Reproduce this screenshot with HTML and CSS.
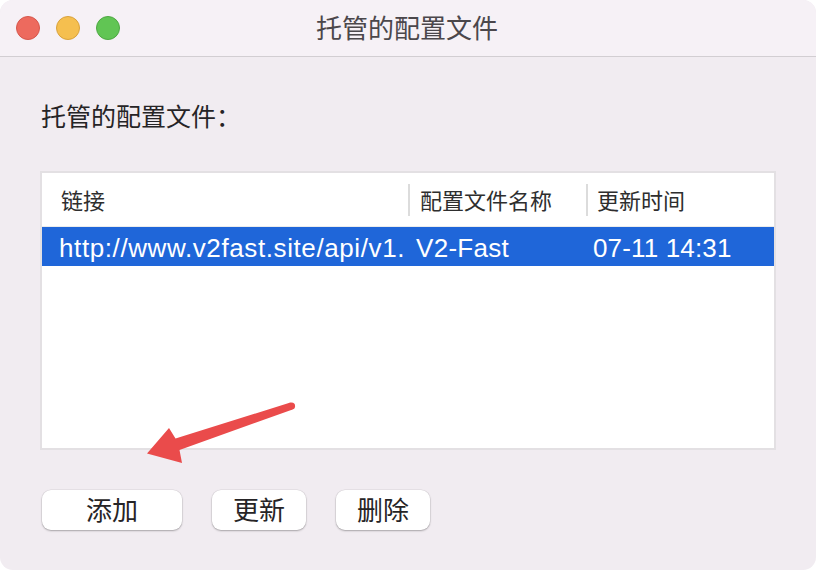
FILE: index.html
```html
<!DOCTYPE html>
<html lang="zh-CN">
<head>
<meta charset="utf-8">
<link rel="stylesheet" href="styles.css">
</head>
<body>
<div class="window">
  <div class="titlebar">
    <div class="lights">
      <span class="light red"></span>
      <span class="light yellow"></span>
      <span class="light green"></span>
    </div>
    <div class="title">托管的配置文件</div>
  </div>
  <div class="content">
    <div class="label">托管的配置文件：</div>
    <div class="table">
      <div class="thead">
        <div class="th c1">链接</div>
        <div class="th c2">配置文件名称</div>
        <div class="th c3">更新时间</div>
      </div>
      <div class="row selected">
        <div class="td c1">http://www.v2fast.site/api/v1.</div>
        <div class="td c2">V2-Fast</div>
        <div class="td c3">07-11 14:31</div>
      </div>
    </div>
    <div class="buttons">
      <button class="btn wide">添加</button>
      <button class="btn">更新</button>
      <button class="btn">删除</button>
    </div>
  </div>
  <svg class="arrow" width="816" height="570" viewBox="0 0 816 570">
    <circle cx="291.5" cy="406" r="3.6" fill="#ea4b4b"/>
    <polygon fill="#ea4b4b" points="290.4,402.6 175.5,438.5 169,428 147,453.5 182,463 179.5,450 292.6,409.4"/>
  </svg>
</div>
</body>
</html>
```
FILE: styles.css
```css
* { box-sizing: border-box; }
html, body { margin: 0; padding: 0; background: #ffffff; }
body {
  width: 816px;
  height: 570px;
  font-family: "Liberation Sans", "Noto Sans CJK SC", sans-serif;
}
.window {
  position: relative;
  width: 816px;
  height: 570px;
  background: #f1ecf1;
  border-radius: 13px;
  overflow: hidden;
}
.titlebar {
  position: relative;
  height: 57px;
  background: #f6f1f6;
  border-bottom: 1px solid #d2ced2;
  display: flex;
  align-items: center;
  justify-content: center;
}
.lights {
  position: absolute;
  left: 16px;
  top: 16px;
  display: flex;
  gap: 16px;
}
.light {
  width: 24px;
  height: 24px;
  border-radius: 50%;
  display: block;
}
.red { background: #ed6a5e; border: 1px solid #d6574c; }
.yellow { background: #f5bf4f; border: 1px solid #d9a23c; }
.green { background: #61c554; border: 1px solid #4ea843; }
.title {
  font-family: "Noto Sans CJK SC", sans-serif;
  font-size: 26px;
  color: #4b474b;
  margin-left: -2px;
  margin-top: -4px;
}
.content {
  padding: 0 40px;
  display: flex;
  flex-direction: column;
}
.label {
  font-family: "Noto Sans CJK SC", sans-serif;
  font-size: 25px;
  color: #262426;
  margin-top: 40px;
  height: 36px;
  line-height: 36px;
  padding-left: 1px;
}
.table {
  margin-top: 38px;
  width: 736px;
  height: 279px;
  background: #ffffff;
  border: 2px solid #e3e0e3;
}
.thead {
  display: flex;
  height: 54px;
  align-items: center;
  border-bottom: 1px solid #ececec;
}
.th {
  font-family: "Noto Sans CJK SC", sans-serif;
  font-size: 22px;
  color: #2e2e2e;
  height: 32px;
  line-height: 30px;
}
.th.c1 { width: 366px; padding-left: 19px; }
.th.c2 { width: 178px; padding-left: 10px; border-left: 2px solid #dcdcdc; }
.th.c3 { flex: 1; padding-left: 9px; border-left: 2px solid #dcdcdc; }
.row {
  display: flex;
  height: 39px;
  align-items: center;
}
.row.selected { background: #1f66d9; color: #ffffff; }
.td {
  font-size: 26px;
  white-space: nowrap;
  overflow: hidden;
  line-height: 39px;
  padding-top: 3px;
}
.td.c1 { width: 369px; padding-left: 17px; letter-spacing: 0.6px; }
.td.c2 { width: 178px; padding-left: 5px; letter-spacing: 0.3px; }
.td.c3 { flex: 1; padding-left: 4px; letter-spacing: 0.15px; }
.buttons {
  margin-top: 40px;
  display: flex;
  gap: 30px;
  padding-left: 2px;
}
.btn {
  font-family: "Noto Sans CJK SC", sans-serif;
  font-size: 26px;
  color: #262426;
  background: #ffffff;
  border: none;
  border-radius: 9px;
  height: 40px;
  width: 94px;
  padding: 0 0 3px 0;
  line-height: 37px;
  box-shadow: 0 1px 2px rgba(0,0,0,0.28), 0 0 0 0.5px rgba(0,0,0,0.08);
}
.btn.wide { width: 140px; }
.arrow {
  position: absolute;
  left: 0;
  top: 0;
  pointer-events: none;
}
```
